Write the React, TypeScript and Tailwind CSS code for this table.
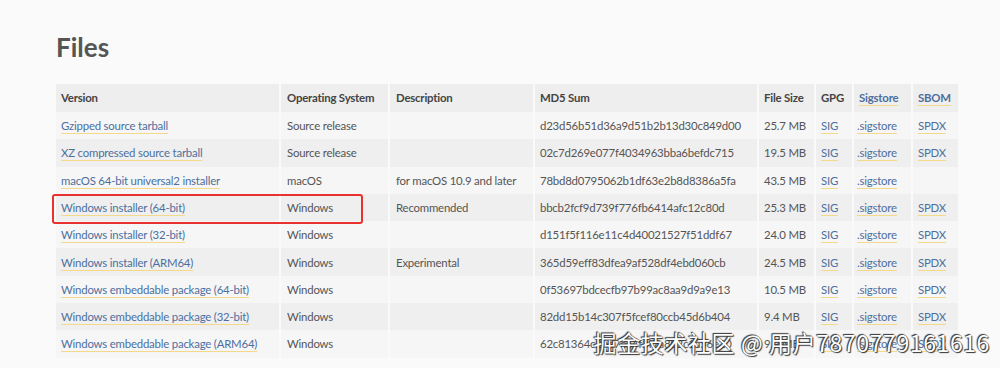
const rows = [
  ['Gzipped source tarball', 'Source release', '', 'd23d56b51d36a9d51b2b13d30c849d00', '25.7 MB', true],
  ['XZ compressed source tarball', 'Source release', '', '02c7d269e077f4034963bba6befdc715', '19.5 MB', true],
  ['macOS 64-bit universal2 installer', 'macOS', 'for macOS 10.9 and later', '78bd8d0795062b1df63e2b8d8386a5fa', '43.5 MB', false],
  ['Windows installer (64-bit)', 'Windows', 'Recommended', 'bbcb2fcf9d739f776fb6414afc12c80d', '25.3 MB', true],
  ['Windows installer (32-bit)', 'Windows', '', 'd151f5f116e11c4d40021527f51ddf67', '24.0 MB', true],
  ['Windows installer (ARM64)', 'Windows', 'Experimental', '365d59eff83dfea9af528df4ebd060cb', '24.5 MB', true],
  ['Windows embeddable package (64-bit)', 'Windows', '', '0f53697bdcecfb97b99ac8aa9d9a9e13', '10.5 MB', true],
  ['Windows embeddable package (32-bit)', 'Windows', '', '82dd15b14c307f5fcef80ccb45d6b404', '9.4 MB', true],
  ['Windows embeddable package (ARM64)', 'Windows', '', '62c81364c2bd7ea4f3f7a8b2c1a56e20', '9.9 MB', true]
] as const;

function Link({ children }: { children: React.ReactNode }) {
  return (
    <span className="border-b border-[#f5d98a] pb-[1px] text-[#4d6f9e]">{children}</span>
  );
}

export default function App() {
  return (
    <div
      className="relative h-[368px] w-[1000px] overflow-hidden bg-[#fafafa] text-[11.4px] tracking-[-0.2px] text-[#555]"
      style={{ fontFamily: 'Lato, "Noto Sans", sans-serif' }}
    >
      <h1 className="pl-[56px] pt-[29px] text-[26px] font-bold leading-[36px] tracking-normal text-[#555]">
        Files
      </h1>

      <div className="relative mt-[19px] pl-[54px]">
        <table className="table-fixed border-separate border-spacing-x-[2px] border-spacing-y-0 text-left">
          <colgroup>
            <col className="w-[223px]" />
            <col className="w-[107px]" />
            <col className="w-[143px]" />
            <col className="w-[222px]" />
            <col className="w-[55px]" />
            <col className="w-[36px]" />
            <col className="w-[57px]" />
            <col className="w-[45px]" />
          </colgroup>
          <thead>
            <tr className="h-[28px] bg-[#eeeeee] text-[#444]">
              <th className="pl-[5px] font-bold">Version</th>
              <th className="pl-[6px] font-bold">Operating System</th>
              <th className="pl-[6px] font-bold">Description</th>
              <th className="pl-[5px] font-bold">MD5 Sum</th>
              <th className="pl-[5px] font-bold">File Size</th>
              <th className="pl-[5px] font-bold">GPG</th>
              <th className="pl-[5px] font-bold">
                <Link>Sigstore</Link>
              </th>
              <th className="pl-[5px] font-bold">
                <Link>SBOM</Link>
              </th>
            </tr>
          </thead>
          <tbody>
            {rows.map(([name, os, desc, md5, size, sbom], i) => (
              <tr
                key={name}
                className={i % 2 === 0 ? 'h-[27.3px] bg-[#f6f6f6]' : 'h-[27.3px] bg-[#efefef]'}
              >
                <td className="pl-[5px]">
                  <Link>{name}</Link>
                </td>
                <td className="pl-[6px]">{os}</td>
                <td className="pl-[6px]">{desc}</td>
                <td className="pl-[5px]">{md5}</td>
                <td className="pl-[5px]">{size}</td>
                <td className="pl-[5px]">
                  <Link>SIG</Link>
                </td>
                <td className="pl-[3px]">
                  <Link>.sigstore</Link>
                </td>
                <td className="pl-[5px]">{sbom ? <Link>SPDX</Link> : null}</td>
              </tr>
            ))}
          </tbody>
        </table>

        {/* highlight box over the recommended row */}
        <div className="absolute left-[52px] top-[110px] h-[30px] w-[311px] rounded-[3px] border-2 border-[#e8322f]" />
      </div>

      {/* watermark */}
      <div
        className="absolute right-[10px] top-[327px] text-[23px] leading-[30px] tracking-[0.6px] text-white"
        style={{
          fontFamily: '"Noto Sans CJK SC", sans-serif',
          textShadow: '0 0 1px #333, 1px 1px 1px #333, -1px -1px 1px #333'
        }}
      >
        掘金技术社区 @ 用户7870779161616
      </div>
    </div>
  );
}
